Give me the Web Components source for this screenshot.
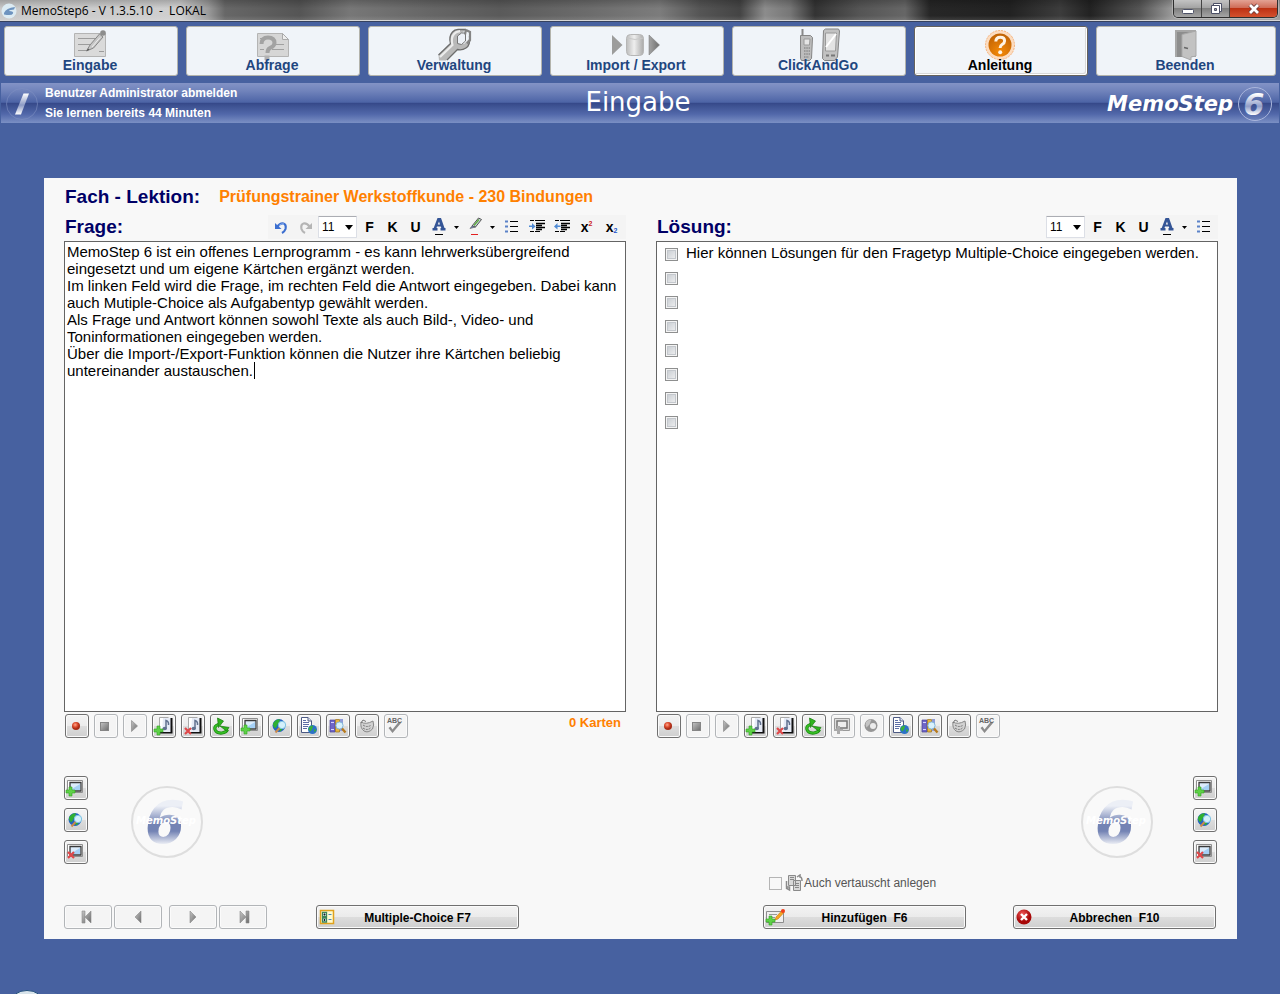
<!DOCTYPE html>
<html lang="de">
<head>
<meta charset="utf-8">
<title>MemoStep6 - V 1.3.5.10 - LOKAL</title>
<style>
html, body { margin: 0; padding: 0; }
body { background: #4761a0; font-family: "Liberation Sans", Arial, sans-serif; color: #000; }
</style>
</head>
<body>
<memo-app></memo-app>
<script>
const base = '*{box-sizing:border-box}button,input,select,textarea{font-family:inherit;margin:0}';
function define(name, html, setup) {
  const tpl = document.createElement('template');
  tpl.innerHTML = html;
  customElements.define(name, class extends HTMLElement {
    constructor() {
      super();
      this.attachShadow({ mode: 'open' }).appendChild(tpl.content.cloneNode(true));
    }
    connectedCallback() {
      if (this.ready) return;
      this.ready = true;
      if (setup) setup(this, this.shadowRoot);
    }
  });
}

/* ---------- icons: [width, height, markup] ---------- */
const greyGrad = '<defs><linearGradient id="g" x1="0" y1="0" x2="1" y2="1"><stop offset="0" stop-color="#c4c4c4"/><stop offset="1" stop-color="#6c6c6c"/></linearGradient></defs>';
const plus = (x, y) => `<path d="M${x + 3} ${y}h3v3h3v3h-3v3h-3v-3h-3v-3h3z" fill="#5fd048" stroke="#2fa51f" stroke-width=".6"/>`;
const cross = (x, y) => `<path d="M${x} ${y}l6 6M${x + 6} ${y}l-6 6" stroke="#e0484a" stroke-width="2.2" fill="none"/>`;
const note = '<path d="M8 4h12.500v15.500H8z" fill="#111"/><path d="M8 4h10.500v14H8z" fill="#e6ebf6"/><path d="M8 4h3l-1 14H8z" fill="#fff"/><path d="M14 14.500v-8q3 1 2.500 4.500" stroke="#61718f" stroke-width="1.500" fill="none"/><ellipse cx="12.800" cy="14.500" rx="2.200" ry="1.700" fill="#61718f"/><path d="M7.500 18.500V3.500h9" stroke="#a9a9a9" fill="none"/>';
const frame = '<path d="M3.500 4.500h15v12h-15z" fill="#fff" stroke="#8f8f8f"/><path d="M6 6.500h11v8.500H6z" fill="#dcecfb" stroke="#3a3a3a" stroke-width="1.300"/><path d="M7 13.500l9-5.500v6H7z" fill="#a5d0f5"/>';
const sheet = '<path d="M4.500 3.500h6.500l3.500 3.500v11.500h-10z" fill="#fff" stroke="#4c5a84"/><path d="M11 3.500v3.500h3.500" fill="#dfe4f2" stroke="#4c5a84"/><path d="M6 8.500h6M6 10.500h6M6 12.500h5M6 14.500h4M6 6.500h3" stroke="#5c6ea6"/>';
const ICONS = {
  eingabe: [48, 34, '<path d="M8.500 6.500h31v23h-31z" fill="#dadada" stroke="#b4b4b4"/><path d="M12 11.500h18M12 17.500h13M12 23.500h9" stroke="#9c9c9c"/><path d="M33 24.500h5" stroke="#9c9c9c"/><path d="M20.500 24l3.500-6L33.500 7l3.500 3-9.500 11z" fill="#c6c6c6" stroke="#858585"/><path d="M26 20l8-9.500" stroke="#eee"/><circle cx="37" cy="6" r="2.800" fill="#8d8d8d"/><path d="M20.500 24l1.500-2.500 1.500 1.200z" fill="#555"/>'],
  abfrage: [48, 34, '<path d="M9.500 6.500h25l6 6v17h-31z" fill="#d6d6d6" stroke="#b4b4b4"/><path d="M34.500 6.500v6h6z" fill="#eee" stroke="#aaa"/><path d="M24 17.500h12M24 22.500h12M12 22.500h4M12 11.500h3" stroke="#a0a0a0"/><path d="M13.500 17q0-6.500 6.500-6.500t6.500 5.500q0 3-4.500 5-2.500 1.300-2.500 5" fill="none" stroke="#a2a2a2" stroke-width="4"/><path d="M16.500 28.500h5v4.500h-5z" fill="#b2b2b2"/>'],
  verwaltung: [48, 34, '<path d="M8.500 28L20.500 16.500q-2-7 2-11.500 2-2.500 5.500-2.500h8l-6 5v8l4 1.500 5.500-5.500q1 6.500-3.500 9.500-4 2.500-8.500 1.500L16 33.500H9z" fill="#b9b9b9"/><path d="M8.500 28L20.500 16.500q-2-7 2-11.500 2-2.500 5.500-2.500h8M39.500 9q1 9.500-3.500 12-4 2.500-8.500 1.500L17 33" fill="none" stroke="#6d6d6d" stroke-width="1.300"/><path d="M10 30L22.500 18q-2-7 1.500-11 2-2.500 6-2.800" stroke="#ececec" stroke-width="2.200" fill="none"/><path d="M27.500 9l4-3h4v8l-4 3.500-4-1z" fill="#edf1f7" stroke="#777"/><path d="M36 2.500l-1 5M36 3l4 2v8l-3 3.500" stroke="#858585" stroke-width="2.200" fill="none"/>'],
  import: [48, 34, '<defs><linearGradient id="g"><stop offset="0" stop-color="#bcbcbc"/><stop offset=".45" stop-color="#eeeeee"/><stop offset="1" stop-color="#aaaaaa"/></linearGradient><linearGradient id="t"><stop offset="0" stop-color="#a4a4a4"/><stop offset="1" stop-color="#6e6e6e"/></linearGradient></defs><path d="M0 8v20l10.500-10z" fill="#9c9c9c"/><rect x="14.500" y="7.500" width="17" height="21" rx="4" fill="url(#g)" stroke="#b6b6b6"/><path d="M15 11q8.500 3 16 0" stroke="#c8c8c8" fill="none"/><path d="M37 8v20L47.500 18z" fill="url(#t)" stroke="#777" stroke-width=".5"/>'],
  click: [48, 34, '<path d="M8.500 2v7" stroke="#888" stroke-width="2"/><path d="M6.500 8.500h10l2 2-1 21-2 2h-8l-1-2z" fill="#bdbdbd" stroke="#858585"/><path d="M10 12h6l-.5 6H10z" fill="#e5e5e5" stroke="#999"/><path d="M10 21h6M10 24h6M10 27h6M10 30h5" stroke="#777" stroke-dasharray="1.500 .8"/><path d="M29.500 3.500l2-1.500h13l1 2-2 26-3 3.500h-10l-2-2z" fill="#c2c2c2" stroke="#858585"/><path d="M31.500 6h11l-1 18h-10z" fill="#e3e3e3" stroke="#9a9a9a"/><path d="M32 20L42 7" stroke="#fff" stroke-width="2"/><path d="M32 28.500h3M37 28.500h4" stroke="#777" stroke-width="2"/>'],
  anleitung: [48, 34, '<defs><radialGradient id="g" cx=".5" cy=".8" r=".9"><stop offset="0" stop-color="#f58a08"/><stop offset="1" stop-color="#b85c03"/></radialGradient></defs><circle cx="24" cy="18" r="14.500" fill="#fcdcc0" stroke="#f5b27c" stroke-dasharray="2 1"/><circle cx="24" cy="18" r="11.500" fill="url(#g)"/><path d="M19.800 14.500q.2-4.300 4.500-4.300t4.300 3.800q0 2-2.500 3.500-2 1.200-2 3.500" fill="none" stroke="#fff3e4" stroke-width="3"/><circle cx="24.200" cy="25.300" r="2" fill="#fff3e4"/>'],
  beenden: [48, 34, '<path d="M14 3h21v27H14z" fill="#a6a6a6"/><path d="M16 5h17v25H16z" fill="#8d8d8d"/><path d="M21 7.500L35 4v25l-5 1v3l-9-3.500z" fill="#c2c2c2" stroke="#a9a9a9"/><path d="M23 20.500l4 1" stroke="#666" stroke-width="1.500"/>'],
  app: [16, 16, '<circle cx="8" cy="8" r="7.500" fill="#dcebf3"/><path d="M3 10q2-5 11-6l-1 2.500q-4 0-5 1.500 5 0 4 2.500t-9 1z" fill="#6d93bf"/>'],
  undo: [16, 16, '<path d="M4 8q3.500-4.500 6.500-3.500t2 5.500q-.8 2.500-3.500 4" fill="none" stroke="#3c6fd0" stroke-width="2.200"/><path d="M2 4v6h6.500z" fill="#3c6fd0"/><path d="M6 6.500q3-2.500 5-1.500" stroke="#8fb3f0" fill="none"/>'],
  redo: [16, 16, '<path d="M12 8Q8.500 3.500 5.500 4.500T3.500 10q.8 2.500 3.500 4" fill="none" stroke="#b5b5b5" stroke-width="2.200"/><path d="M14 4v6H7.500z" fill="#b5b5b5"/>'],
  color: [16, 20, '<path d="M6.500 1h3.500l3.500 10h1v2.500H9.500V11h.8l-.5-1.500H6L5.500 11h1v2.500h-5V11h1.200zM8 4.500L6.800 7.500H9z" fill="#345596" fill-rule="evenodd"/><path d="M4 17.500h8" stroke="#000"/>'],
  marker: [16, 20, '<path d="M5 9l6.500-8 3 1.500L8.500 10z" fill="#c6d2de" stroke="#555"/><path d="M7 8.500l5-6" stroke="#5fae3a" stroke-width="1.200"/><path d="M5 9L3 11.500l5.500-1.500z" fill="#7488c0" stroke="#555" stroke-width=".6"/><path d="M4 17.500h7" stroke="#e32020"/>'],
  drop: [7, 20, '<path d="M1 9h5L3.500 12z" fill="#000"/>'],
  list: [16, 20, '<path d="M6 4.500h8M6 9.500h8M6 14.500h8" stroke="#000"/><path d="M1 3.500h3v2H1zM1 8.500h3v2H1zM1 13.500h3v2H1z" fill="#5b82c8"/>'],
  indent: [18, 20, '<path d="M2 3.500h4M7 3.500h10M2 14.500h4M7 14.500h5" stroke="#000"/><path d="M8 6.500h9M8 8.500h6M8 10.500h9M8 12.500h6" stroke="#000" stroke-width="1.500"/><path d="M1 8.500h3V6l3.500 3.500L4 12.500V10H1z" fill="#4f8ad4"/>'],
  outdent: [18, 20, '<path d="M2 3.500h4M7 3.500h10M2 14.500h4M7 14.500h5" stroke="#000"/><path d="M8 6.500h9M8 8.500h6M8 10.500h9M8 12.500h6" stroke="#000" stroke-width="1.500"/><path d="M7.500 8.500h-3V6L1 9.500l3.500 3V10h3z" fill="#4f8ad4"/>'],
  rec: [24, 24, '<defs><radialGradient id="g" cx=".4" cy=".35"><stop offset="0" stop-color="#ffa78c"/><stop offset=".6" stop-color="#dc4a2c"/><stop offset="1" stop-color="#a82c16"/></radialGradient></defs><circle cx="11" cy="12" r="4" fill="url(#g)"/>'],
  stop: [24, 24, greyGrad + '<rect x="6.500" y="8.500" width="8" height="8" fill="url(#g)" stroke="#858585"/>'],
  play: [24, 24, greyGrad + '<path d="M8.500 6.500l6 5.500-6 5.500z" fill="url(#g)" stroke="#8e8e8e" stroke-width=".7"/>'],
  noteadd: [24, 24, note + plus(2, 12)],
  notedel: [24, 24, note + cross(4, 14)],
  refresh: [24, 24, '<path d="M8.500 10.500q-4.500 1.500-3.500 5 1.500 4 7 3.500 4-.5 5.500-3.500" fill="none" stroke="#1a8a10" stroke-width="3.200"/><path d="M8.500 10.500q-4.500 1.500-3.500 5 1.500 4 7 3.500 4-.5 5.500-3.500" fill="none" stroke="#39c226" stroke-width="1.600"/><path d="M7.500 4l1 9.500 5-6.500z" fill="#2fb41d" stroke="#157a0c" stroke-width=".7"/><path d="M10 12l9 1.500-2.500 3.500z" fill="#2fb41d" stroke="#157a0c" stroke-width=".7"/>'],
  imgadd: [24, 24, frame + plus(2, 11)],
  imgdel: [24, 24, frame + cross(4, 12)],
  imgaddoff: [24, 24, '<path d="M3.500 4.500h15v12h-15z" fill="#dedede" stroke="#999"/><path d="M6 7h10v7H6z" fill="#eee" stroke="#777" stroke-width="1.500"/><path d="M6 12h3v3h3v2H9v3H6v-3H3v-2h3z" fill="#aaa"/>'],
  globe: [24, 24, '<circle cx="11" cy="11.500" r="6.500" fill="#2463c4"/><path d="M5 9.500Q7.500 5 12 5.200q-1 2-.5 3.500-2.500 1-2.500 3.500L7 14.500q-2.500-2-2-5zM12 13l3 1.500-2.500 3q-2-1-.5-4.500z" fill="#2fb032"/><circle cx="14" cy="11" r="3.700" fill="#d3f0fb" stroke="#7fc4e4"/><path d="M11.500 14l-4 4.500" stroke="#c98a4d" stroke-width="2"/>'],
  globeoff: [24, 24, '<circle cx="11" cy="11.500" r="6.500" fill="#969696"/><path d="M6 8q2.500-3 5.500-2.500l-2 5-3 3q-1.500-2-.5-5.500z" fill="#c4c4c4"/><circle cx="13" cy="12" r="3" fill="#ececec"/>'],
  docglobe: [24, 24, sheet + '<circle cx="15.500" cy="15.500" r="4.500" fill="#2c72c8"/><path d="M11.500 14q2-3 4.500-2.500l-.5 3-2 3q-2-1-2-3.500zM17 15l2.500 1-2 2.500z" fill="#38b03c"/>'],
  search: [24, 24, '<path d="M4 6h5v12H4z" fill="#6f66c8" stroke="#4b4494" stroke-width=".7"/><path d="M5 8.500h3M5 15.500h3" stroke="#d6d2ff"/><path d="M9.500 5.500h4V18h-4z" fill="#e8b53c" stroke="#96701c" stroke-width=".7"/><path d="M14 5h3v12h-3z" fill="#8f9bd8"/><circle cx="13.500" cy="11.500" r="3.600" fill="#d9f1fc" stroke="#82b8da"/><path d="M16 14.500l3.500 4" stroke="#b87a1c" stroke-width="2.400"/>'],
  shell: [24, 24, greyGrad + '<path d="M6 8q5 3 12-1 1.500 4-.5 8-4.500 4.500-8.500 2Q5 14 6 8z" fill="#d2d2d2" stroke="#888"/><path d="M8 11q4 3 8.500 0M8 14q4 3 7.500 0" stroke="#777" fill="none" stroke-dasharray="2 1"/><path d="M6 9l2-3 3 1.500" stroke="#777" fill="none"/>'],
  check: [24, 24, '<path d="M4.500 14l4 5 8.500-10-2-1.500-6.500 8-2-3z" fill="#8c8c8c"/>'],
  first: [24, 24, greyGrad + '<path d="M6 6h3v12H6zM15 6v12l-6-6z" fill="url(#g)" stroke="#8b8b8b" stroke-width=".6"/>'],
  prev: [24, 24, greyGrad + '<path d="M15 6v12l-6-6z" fill="url(#g)" stroke="#8b8b8b" stroke-width=".6"/>'],
  next: [24, 24, greyGrad + '<path d="M9 6v12l6-6z" fill="url(#g)" stroke="#8b8b8b" stroke-width=".6"/>'],
  last: [24, 24, greyGrad + '<path d="M15 6h3v12h-3zM9 6v12l6-6z" fill="url(#g)" stroke="#8b8b8b" stroke-width=".6"/>'],
  choice: [24, 24, '<rect x="3.500" y="4.500" width="13" height="13" fill="#fffbd0" stroke="#e0a21c" stroke-width="1.500"/><path d="M5.500 6.500h4v4h-4zM5.500 12h4v4h-4z" fill="#fff" stroke="#3c8458" stroke-width="1.300"/><path d="M7 8h1v1H7zM7 13.500h1v1H7z" stroke="#123"/><path d="M11.500 8.500h3M11.500 13.500h3" stroke="#4a88b8"/>'],
  addcard: [24, 24, '<path d="M2.500 5.500h17v11h-17z" fill="#efefef" stroke="#8d8d8d"/><path d="M5 8.500h8M5 11.500h6" stroke="#999"/><path d="M11 14l1-3 6-6.500 2 2-6 6.500z" fill="#f6a623" stroke="#c9780c" stroke-width=".6"/><circle cx="19" cy="5" r="2" fill="#f0401c"/>' + plus(2, 10)],
  cancel: [24, 24, '<defs><radialGradient id="g" cx=".4" cy=".3"><stop offset="0" stop-color="#f05a5a"/><stop offset="1" stop-color="#a80808"/></radialGradient></defs><circle cx="10" cy="11" r="7.500" fill="url(#g)"/><path d="M7 8l6 6M13 8l-6 6" stroke="#fff" stroke-width="2.400"/>'],
  swap: [18, 18, '<path d="M3.500 1.500h7v10h-7zM8.500 6.500h7v10h-7z" fill="#d8d8d8" stroke="#8a8a8a"/><path d="M5 3.500h4M5 5.500h4M10 9.500h4M10 11.500h4M10 13.500h4" stroke="#888"/><path d="M1.500 7v6h3v3l-3.500-2M12 3l3-2v2q2 0 2 4" stroke="#8a8a8a" stroke-width="1.500" fill="none"/>'],
  info: [34, 34, '<defs><linearGradient id="g" x1="0" y1="0" x2="0" y2="1"><stop offset="0" stop-color="#fff"/><stop offset=".55" stop-color="#8b99c4"/><stop offset="1" stop-color="#fff"/></linearGradient></defs><circle cx="17" cy="17" r="15.500" fill="none" stroke="#7f90c2" stroke-opacity=".6"/><path d="M18.500 6.500h5.500l-8 21h-6z" fill="url(#g)"/>'],
  orb: [28, 4, '<defs><linearGradient id="g" x1="0" y1="0" x2="0" y2="1"><stop offset="0" stop-color="#dfe9ef"/><stop offset="1" stop-color="#9fb9ca"/></linearGradient></defs><ellipse cx="15" cy="12" rx="16" ry="11.500" fill="url(#g)" stroke="#23507c"/>']
};
customElements.define('memo-icon', class extends HTMLElement {
  static get observedAttributes() { return ['name']; }
  constructor() { super(); this.attachShadow({ mode: 'open' }); }
  attributeChangedCallback() {
    const icon = ICONS[this.getAttribute('name')];
    if (!icon) return;
    const [w, h, m] = icon;
    this.shadowRoot.innerHTML =
      `<style>:host{display:block;flex:none}svg{display:block}</style><svg width="${w}" height="${h}" viewBox="0 0 ${w} ${h}" aria-hidden="true">${m}</svg>`;
  }
});

define('memo-titlebar', `<style>${base}
:host{display:flex;align-items:center;height:22px;padding-left:1px;border-bottom:1px solid #35415f;box-shadow:inset 0 -1px #d6d6d6;
 background:linear-gradient(#0003,#0000 40%,#0000 75%,#fff2),linear-gradient(90deg,#c9c9c9 0,#cfcfcf 180px,#9b9b9b 208px,#676767 225px,#555 300px,#777 350px,#666 430px,#5a5a5a 500px,#6c6c6c 590px,#7c7c7c 660px,#555 700px,#444 740px,#8c8c8c 765px,#777 790px,#333 815px,#555 860px,#666 905px,#262626 930px,#222 1010px,#3c3c3c 1060px,#222 1090px,#555 1140px,#999 1172px)}
h1{margin:0 auto 0 4px;font:12px/18px "Open Sans",sans-serif;white-space:pre}
.c{display:flex;align-self:flex-start;height:18px;margin-right:2px;border:1px solid #2e2e2e;border-top:0;border-radius:0 0 5px 5px;overflow:hidden;box-shadow:0 0 0 1px #ccc8}
button{width:28px;height:17px;padding:0;border:0;border-right:1px solid #444;background:linear-gradient(#c3c3c3,#a2a2a2 48%,#7f7f7f 50%,#a5a5a5);display:flex;align-items:center;justify-content:center}
button:last-child{width:47px;border:0;background:linear-gradient(#e3a294,#cf6c58 45%,#bd3113 50%,#d4512d)}
svg{display:block}
</style><memo-icon name="app"></memo-icon><h1>MemoStep6 - V 1.3.5.10  -  LOKAL</h1>
<div class="c"><button aria-label="Minimieren"><svg width="14" height="14"><rect x="1.500" y="7.500" width="11" height="4" rx="1" fill="#fff" stroke="#4c5066"/></svg></button>
<button aria-label="Wiederherstellen"><svg width="14" height="14"><path d="M4.500 1.500h8v8h-8z" fill="#fff" stroke="#4c5066"/><path d="M2.500 3.500h8v8h-8z" fill="#fff" stroke="#4c5066"/><path d="M5.500 6.500h2v2h-2z" fill="#aaa" stroke="#4c5066"/></svg></button>
<button aria-label="Schließen"><svg width="14" height="14"><path d="M3 3l8 8M11 3l-8 8" stroke="#6a3a38" stroke-width="4.500"/><path d="M3 3l8 8M11 3l-8 8" stroke="#fff" stroke-width="2.800"/></svg></button></div>`);

define('nav-button', `<style>${base}
:host{display:block;min-width:0}
button{display:flex;flex-direction:column;align-items:center;width:100%;height:50px;padding:0 2px 0 0;border:1px solid #b3b3ac;border-radius:3px;background:#f0f4f9;color:#1f467f;font-weight:bold;font-size:14px;line-height:16px}
memo-icon{height:30px}
span{position:relative}
:host([active]) button{border-color:#66625c;background:#f2f5f9;color:#000;box-shadow:inset -1px -1px #fff,inset 1px 1px #fff,inset -2px -2px #d8d8d8}
</style><button><memo-icon></memo-icon><span><slot></slot></span></button>`,
  (h, r) => r.querySelector('memo-icon').setAttribute('name', h.getAttribute('icon')));

define('memo-banner', `<style>${base}
:host{display:grid;grid-template-columns:1fr auto 1fr;align-items:center;height:40px;margin:7px 1px 0;padding:0 6px 0 4px;color:#fff;
 background:linear-gradient(#8393c6,#7083bb 20%,#4d64a6 48%,#36498a 51%,#3c5090 56%,#5268aa 78%,#7b90c4)}
.u{display:flex;align-items:center;gap:6px}
.u div{display:flex;flex-direction:column;padding-bottom:2px;font-weight:bold;font-size:12px;line-height:20px}
a{color:inherit;text-decoration:none}
h2{margin:0;padding:0 2px 4px 0;font:26px/32px "DejaVu Sans",sans-serif}
.l{justify-self:end;display:flex;align-items:center;gap:4px;font:italic bold 21px/24px "DejaVu Sans",sans-serif}
svg{display:block}
</style><div class="u"><memo-icon name="info"></memo-icon><div><a href="#abmelden">Benutzer Administrator abmelden</a><span>Sie lernen bereits 44 Minuten</span></div></div>
<h2>Eingabe</h2>
<div class="l"><span>MemoStep</span><svg width="36" height="36" viewBox="0 0 36 36"><defs><linearGradient id="g" x1="0" y1="0" x2="0" y2="1"><stop offset=".2" stop-color="#fff"/><stop offset=".55" stop-color="#8f9dc8"/><stop offset=".8" stop-color="#fff"/></linearGradient></defs><circle cx="18" cy="18" r="16.500" fill="none" stroke="#aab6dc"/><text x="17" y="29" text-anchor="middle" font-size="30" fill="url(#g)">6</text></svg></div>`);

define('tool-button', `<style>${base}
:host{display:block;width:25px}
:host([kind=letter]){width:23px}:host([kind=drop]){width:13px}
button{display:flex;align-items:center;justify-content:center;width:100%;height:22px;padding:0;border:0;background:none;font-weight:bold;font-size:14px;line-height:20px}
sup,sub{font-size:7px;line-height:8px}sup{color:#c22;margin-bottom:6px}sub{color:#25c;margin-top:8px}
</style><button><slot></slot></button>`, (h, r) => {
  const b = r.querySelector('button'), i = h.getAttribute('icon'), s = h.getAttribute('script');
  b.setAttribute('aria-label', h.getAttribute('label'));
  if (i) b.innerHTML = `<memo-icon name="${i}"></memo-icon>`;
  if (s) b.innerHTML = `x<${s}>2</${s}>`;
});

define('size-select', `<style>${base}
:host{display:block;position:relative;width:39px;margin-right:1px}
select{appearance:none;width:100%;height:22px;padding:0 0 0 3px;border:1px solid #dcdfe6;border-top-color:#abadb3;border-radius:1px;background:#fff;font-size:12px;color:#000;display:block}
svg{position:absolute;right:4px;top:9px;pointer-events:none}
</style><select aria-label="Schriftgröße"><option>11</option><option>12</option><option>14</option></select><svg width="8" height="5"><path d="M0 0h8L4 5z"/></svg>`);

define('memo-toolbar', `<style>:host{display:flex;align-items:center;height:24px;padding-right:2px;background:#f4f4f4}</style><slot></slot>`);

define('media-button', `<style>${base}
:host{display:block}
button{display:flex;align-items:center;justify-content:center;position:relative;width:24px;height:24px;padding:0;border:1px solid #707070;border-radius:3px;background:linear-gradient(#f4f4f4,#ececec 49%,#dddddd 50%,#cfcfcf);box-shadow:inset 0 0 0 1px #fbfbfb}
button:disabled{border-color:#b2b5b8;background:#f4f4f4}
:host([wide]) button{width:48px}
span{position:absolute;left:2px;top:2px;font-weight:bold;font-size:7px;line-height:8px;color:#666}
</style><button></button>`, (h, r) => {
  const b = r.querySelector('button'), i = h.getAttribute('icon');
  b.innerHTML = `<memo-icon name="${i}"></memo-icon>` + (i === 'check' ? '<span>ABC</span>' : '');
  b.disabled = h.hasAttribute('off');
  b.setAttribute('aria-label', h.getAttribute('label') || i);
});

define('media-bar', `<style>:host{display:flex;gap:5px}</style>`, (h, r) => {
  const off = (h.getAttribute('off') || '').split(' ');
  const items = [['rec', 'Aufnehmen'], ['stop', 'Stopp'], ['play', 'Abspielen'], ['noteadd', 'Ton hinzufügen'], ['notedel', 'Ton löschen'], ['refresh', 'Aktualisieren'], ['imgadd', 'Bild hinzufügen'], ['globe', 'Bild im Web suchen'], ['docglobe', 'Webseite'], ['search', 'Nachschlagen'], ['shell', 'Sprachausgabe'], ['check', 'Rechtschreibung']];
  for (const [n, l] of items) {
    const b = document.createElement('media-button'), o = off.includes(n);
    b.setAttribute('icon', o && ICONS[n + 'off'] ? n + 'off' : n);
    b.setAttribute('label', l);
    if (o) b.setAttribute('off', '');
    r.appendChild(b);
  }
});

define('memo-editor', `<style>${base}
:host{display:flex;flex-direction:column;min-width:0}
header{display:flex;justify-content:space-between;align-items:center;height:24px;margin-bottom:2px}
h3{margin:0 0 0 1px;font-size:19px;line-height:24px;color:#000066}
.f{flex:1;min-height:220px;border:1px solid #646464;background:#fff;display:flex;flex-direction:column}
footer{display:flex;justify-content:space-between;margin:2px 5px 0 1px}
</style><header><h3></h3><slot name="tools"></slot></header><div class="f"><slot></slot></div><footer><slot name="media"></slot><slot name="count"></slot></footer>`,
  (h, r) => r.querySelector('h3').textContent = h.getAttribute('heading'));

define('question-text', `<style>${base}
:host{display:flex;flex:1;position:relative}
textarea{display:block;flex:1;width:100%;padding:1px 2px;border:0;outline:0;resize:none;background:none;overflow:hidden;color:#000;caret-color:transparent;font-size:15px;line-height:17px}
i{position:absolute;left:189px;top:120px;width:1px;height:17px;background:#000}
</style><textarea aria-label="Frage">MemoStep 6 ist ein offenes Lernprogramm - es kann lehrwerksübergreifend eingesetzt und um eigene Kärtchen ergänzt werden.
Im linken Feld wird die Frage, im rechten Feld die Antwort eingegeben. Dabei kann auch Mutiple-Choice als Aufgabentyp gewählt werden.
Als Frage und Antwort können sowohl Texte als auch Bild-, Video- und Toninformationen eingegeben werden.
Über die Import-/Export-Funktion können die Nutzer ihre Kärtchen beliebig untereinander austauschen.</textarea><i></i>`);

define('answer-row', `<style>${base}
:host{display:flex;align-items:flex-start;gap:6px;height:24px;padding:0 8px}
.b{appearance:none;flex:none;width:13px;height:13px;margin-top:6px;border:1px solid #8e8f8f;background:linear-gradient(135deg,#c3c8ce,#f4f4f4);box-shadow:inset 0 0 0 1px #f4f4f4,inset 0 0 0 2px #c4c8cd}
.t{flex:1;min-width:0;height:20px;border:0;padding:0 0 0 2px;outline:0;background:none;font-size:15px;line-height:17px;color:#000}
</style><input class="b" type="checkbox" aria-label="Richtig"><input class="t" type="text" aria-label="Antwort">`,
  (h, r) => r.querySelector('.t').value = h.getAttribute('text') || '');

define('memo-logo', `<style>:host{display:block;padding-top:4px}svg{display:block;font-family:"DejaVu Sans",sans-serif;font-weight:bold;font-style:italic}</style>
<svg width="74" height="74" viewBox="0 0 74 74"><defs><linearGradient id="g" x1="0" y1="0" x2="0" y2="1"><stop offset=".25" stop-color="#eceff6"/><stop offset=".5" stop-color="#7383b4"/><stop offset=".62" stop-color="#7383b4"/><stop offset=".82" stop-color="#f1f3f8"/></linearGradient></defs>
<circle cx="37" cy="37" r="35" fill="#f9f9f9" stroke="#dedede" stroke-width="2"/><text x="35" y="58" text-anchor="middle" font-size="58" fill="url(#g)">6</text><text x="36" y="39" text-anchor="middle" font-size="10" fill="#fff">MemoStep</text></svg>`);

define('picture-tools', `<style>
:host{display:flex;align-items:center;gap:42px}
:host([mirror]){flex-direction:row-reverse;gap:39px}
.s{display:flex;flex-direction:column;gap:8px}
</style><div class="s"><media-button icon="imgadd" label="Bild hinzufügen"></media-button><media-button icon="globe" label="Bild im Web suchen"></media-button><media-button icon="imgdel" label="Bild löschen"></media-button></div><memo-logo></memo-logo>`);

define('action-button', `<style>${base}
:host{display:block;width:203px}
button{display:grid;grid-template-columns:24px 1fr 24px;align-items:center;width:100%;height:24px;padding:0;border:1px solid #707070;border-radius:3px;background:linear-gradient(#f3f3f3,#ebebeb 49%,#dddddd 50%,#cfcfcf);box-shadow:inset 0 0 0 1px #fbfbfb;font-weight:bold;font-size:12px;line-height:16px;color:#000;white-space:pre}
</style><button><memo-icon></memo-icon><span><slot></slot></span></button>`,
  (h, r) => r.querySelector('memo-icon').setAttribute('name', h.getAttribute('icon')));

define('swap-option', `<style>${base}
:host{display:block;padding-left:6px}
label{display:flex;align-items:center;height:16px;font-size:12px;line-height:16px;color:#555}
input{appearance:none;width:13px;height:13px;margin-right:3px;border:1px solid #b5b5b5;background:#f8f8f8}
memo-icon{margin-right:1px}
</style><label><input type="checkbox"><memo-icon name="swap"></memo-icon><slot></slot></label>`);

define('memo-app', `<style>${base}
:host{display:flex;flex-direction:column;min-height:100vh}
nav{display:grid;grid-template-columns:repeat(6,174fr) 180fr;gap:8px;padding:4px 4px 0}
main{flex:1;display:flex;flex-direction:column;margin:55px 43px 51px 44px;padding:7px 19px 10px 20px;background:#f8f8f8}
.h{display:flex;align-items:center;gap:19px;height:24px;margin:0 0 6px 1px;font-weight:bold}
.h h2{margin:0;font-size:19px;line-height:24px;color:#000066}
.h span,.k{color:#ff8000}
.h span{font-size:16px}
.k{font-weight:bold;font-size:13px;line-height:18px}
.e{flex:1;display:grid;grid-template-columns:1fr 1fr;gap:30px}
.p{display:flex;justify-content:space-between;margin:38px 1px 11px 0}
.b{display:flex;align-items:flex-end;padding-right:2px}
.n{display:flex;gap:2px}.n+.n{margin-left:7px}
.m{margin:0 auto 0 49px}
.a{display:flex;flex-direction:column;gap:14px;margin-right:47px}
.o{margin-left:12px}
</style>
<memo-titlebar></memo-titlebar>
<nav>
<nav-button icon="eingabe">Eingabe</nav-button><nav-button icon="abfrage">Abfrage</nav-button><nav-button icon="verwaltung">Verwaltung</nav-button><nav-button icon="import">Import / Export</nav-button><nav-button icon="click">ClickAndGo</nav-button><nav-button icon="anleitung" active>Anleitung</nav-button><nav-button icon="beenden">Beenden</nav-button>
</nav>
<memo-banner></memo-banner>
<main>
<div class="h"><h2>Fach - Lektion:</h2><span>Prüfungstrainer Werkstoffkunde - 230 Bindungen</span></div>
<div class="e">
<memo-editor heading="Frage:">
<memo-toolbar slot="tools"><tool-button icon="undo" label="Rückgängig"></tool-button><tool-button icon="redo" label="Wiederholen"></tool-button><size-select></size-select><tool-button kind="letter" label="Fett">F</tool-button><tool-button kind="letter" label="Kursiv">K</tool-button><tool-button kind="letter" label="Unterstrichen">U</tool-button><tool-button kind="letter" icon="color" label="Schriftfarbe"></tool-button><tool-button kind="drop" icon="drop" label="Farbe wählen"></tool-button><tool-button kind="letter" icon="marker" label="Markieren"></tool-button><tool-button kind="drop" icon="drop" label="Markierfarbe wählen"></tool-button><tool-button icon="list" label="Liste"></tool-button><tool-button icon="indent" label="Einzug vergrößern"></tool-button><tool-button icon="outdent" label="Einzug verkleinern"></tool-button><tool-button script="sup" label="Hochgestellt"></tool-button><tool-button script="sub" label="Tiefgestellt"></tool-button></memo-toolbar>
<question-text></question-text>
<media-bar slot="media" off="stop play check"></media-bar><span class="k" slot="count">0 Karten</span>
</memo-editor>
<memo-editor heading="Lösung:">
<memo-toolbar slot="tools"><size-select></size-select><tool-button kind="letter" label="Fett">F</tool-button><tool-button kind="letter" label="Kursiv">K</tool-button><tool-button kind="letter" label="Unterstrichen">U</tool-button><tool-button kind="letter" icon="color" label="Schriftfarbe"></tool-button><tool-button kind="drop" icon="drop" label="Farbe wählen"></tool-button><tool-button icon="list" label="Liste"></tool-button></memo-toolbar>
<answer-row text="Hier können Lösungen für den Fragetyp Multiple-Choice eingegeben werden."></answer-row><answer-row></answer-row><answer-row></answer-row><answer-row></answer-row><answer-row></answer-row><answer-row></answer-row><answer-row></answer-row><answer-row></answer-row>
<media-bar slot="media" off="stop play imgadd globe check"></media-bar>
</memo-editor>
</div>
<div class="p"><picture-tools></picture-tools><picture-tools mirror></picture-tools></div>
<div class="b">
<div class="n"><media-button wide off icon="first" label="Erste Karte"></media-button><media-button wide off icon="prev" label="Vorige Karte"></media-button></div>
<div class="n"><media-button wide off icon="next" label="Nächste Karte"></media-button><media-button wide off icon="last" label="Letzte Karte"></media-button></div>
<action-button class="m" icon="choice">Multiple-Choice F7</action-button>
<div class="a"><swap-option>Auch vertauscht anlegen</swap-option><action-button icon="addcard">Hinzufügen  F6</action-button></div>
<action-button icon="cancel">Abbrechen  F10</action-button>
</div>
</main>
<memo-icon class="o" name="orb"></memo-icon>`);
</script>
</body>
</html>
